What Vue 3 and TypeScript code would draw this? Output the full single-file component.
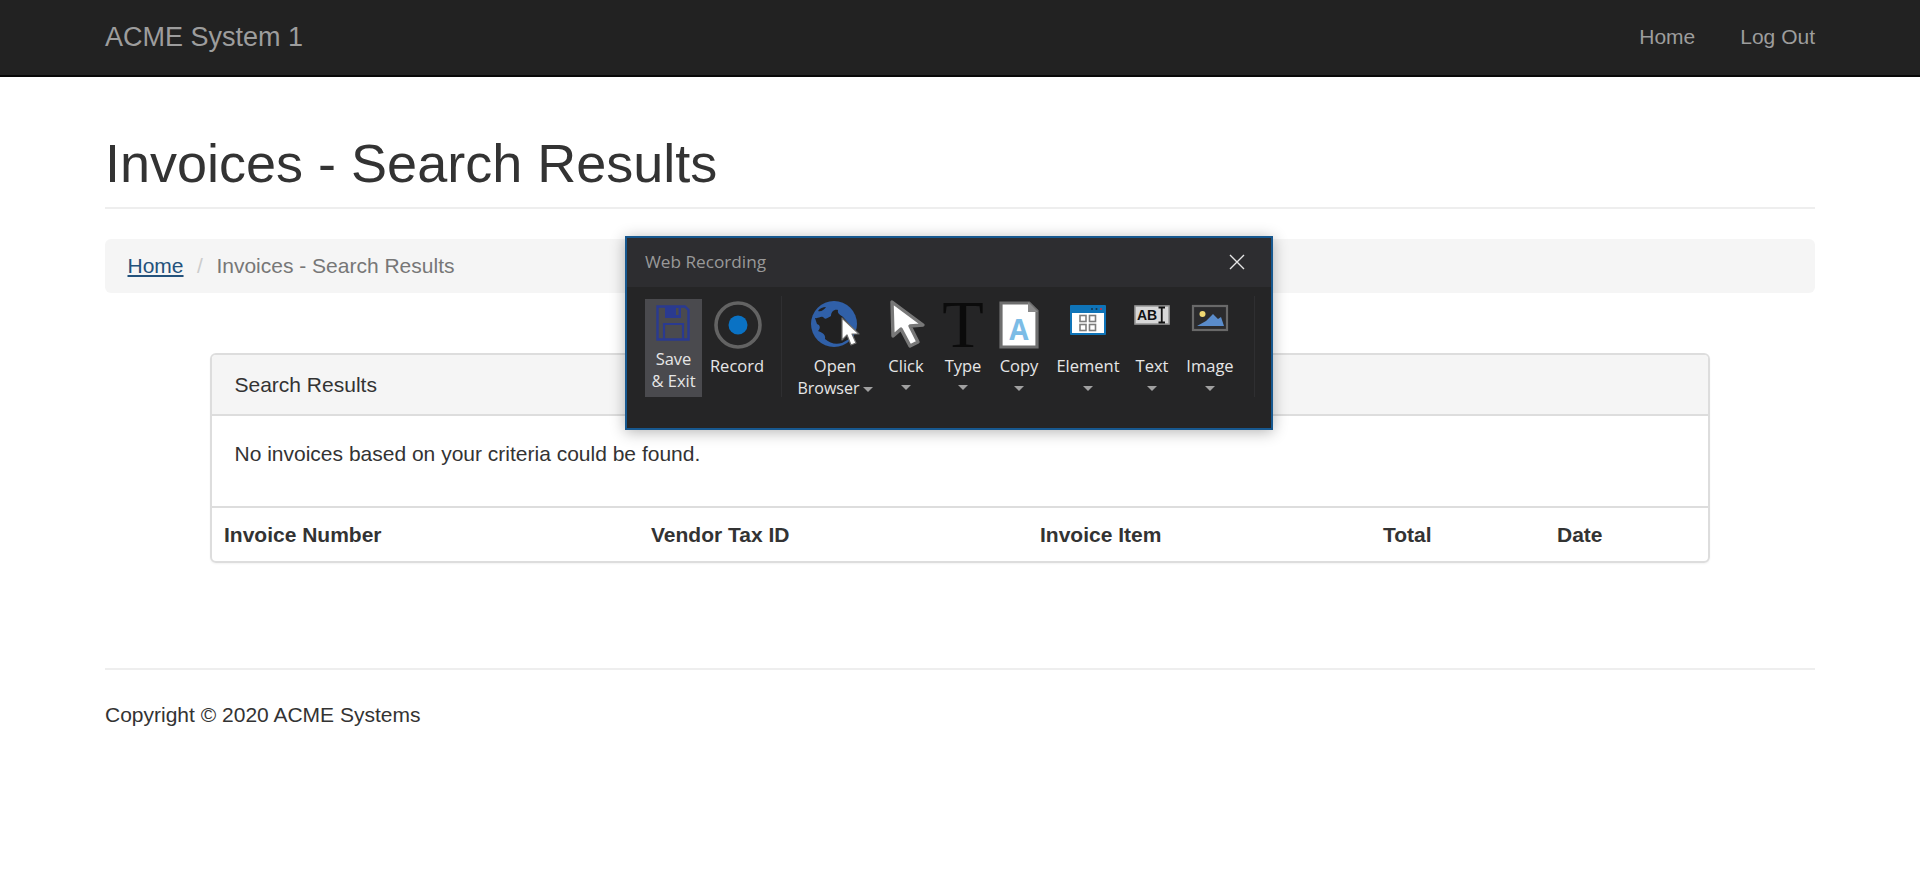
<script setup lang="ts">
const columns = ["Invoice Number", "Vendor Tax ID", "Invoice Item", "Total", "Date"];
</script>

<template>
  <div class="page">
    <nav class="navbar">
      <div class="nav-inner">
        <a class="brand">ACME System 1</a>
        <div class="nav-links">
          <a>Home</a>
          <a>Log Out</a>
        </div>
      </div>
    </nav>

    <main class="container">
      <div class="page-header">
        <h1>Invoices - Search Results</h1>
      </div>
      <div class="breadcrumb">
        <a class="crumb-link">Home</a>
        <span class="crumb-sep">/</span>
        <span class="crumb-active">Invoices - Search Results</span>
      </div>

      <section class="panel">
        <div class="panel-heading">Search Results</div>
        <div class="panel-body">
          <p>No invoices based on your criteria could be found.</p>
        </div>
        <div class="table-head">
          <div v-for="c in columns" :key="c" class="th">{{ c }}</div>
        </div>
      </section>

      <footer class="footer">
        <p>Copyright © 2020 ACME Systems</p>
      </footer>
    </main>

    <div class="recorder">
      <div class="rec-title">
        <span>Web Recording</span>
        <svg class="rec-close" width="16" height="16" viewBox="0 0 16 16">
          <path d="M1 1 15 15M15 1 1 15" stroke="#e6e6e6" stroke-width="1.4" fill="none" />
        </svg>
      </div>
      <div class="rec-body">
        <div class="tool tool-save">
          <svg class="ic-save" width="34" height="36" viewBox="0 0 34 36">
            <path d="M1.5 1.5H29L32.5 5V34.5H1.5Z" fill="none" stroke="#2a3a90" stroke-width="2.4" />
            <rect x="9" y="2" width="16" height="11" fill="#2a3a90" />
            <rect x="20" y="3" width="2.5" height="7" fill="#4a4a4e" />
            <path d="M8 34V19H27V34" fill="none" stroke="#2a3a90" stroke-width="2.2" />
          </svg>
          <div class="label">Save</div>
          <div class="label">&amp; Exit</div>
        </div>

        <div class="tool tool-record">
          <svg class="ic-record" width="48" height="48" viewBox="0 0 48 48">
            <circle cx="24" cy="24" r="22" fill="none" stroke="#636363" stroke-width="3.6" />
            <circle cx="24" cy="24" r="9.5" fill="#0a72c4" />
          </svg>
          <div class="label">Record</div>
        </div>

        <div class="tool-sep sep-a"></div>

        <div class="tool tool-browser">
          <svg class="ic-globe" width="50" height="46" viewBox="0 0 50 46">
            <circle cx="23" cy="23" r="23" fill="#3060a8" />
            <path d="M4 17C8 18 10 14 13 17C15 19 18 16 20 15C20 11 23 8 27 9C26 13 30 14 32 16L40 25L38 38L31 42C24 44 19 42 14 38C15 33 10 31 7 30C10 27 9 24 6 23Z" fill="#212122" />
            <path d="M7 10C10 11 13 9 15 6C12 6 9 7 7 10Z" fill="#212122" />
            <path d="M31 17V39L36 34L40 44L45 42L41 33L48 33Z" fill="#fff" stroke="#6d6d6d" stroke-width="1.2" stroke-linejoin="round" />
          </svg>
          <div class="label">Open</div>
          <div class="label browser-label">Browser<i class="caret caret-inline"></i></div>
        </div>

        <div class="tool tool-click">
          <svg class="ic-cursor" width="38" height="50" viewBox="0 0 38 50">
            <path d="M3 3 4 37 12 30 21 47 29 43 21 27 34 26Z" fill="#fff" stroke="#787878" stroke-width="3.4" stroke-linejoin="round" />
          </svg>
          <div class="label">Click</div>
          <div class="caret-row"><i class="caret"></i></div>
        </div>

        <div class="tool tool-type">
          <svg class="ic-type" width="44" height="50" viewBox="0 0 44 50">
            <text x="22" y="48" text-anchor="middle" font-family="'Liberation Serif', serif" font-size="68" fill="#0b0b0b">T</text>
          </svg>
          <div class="label">Type</div>
          <div class="caret-row"><i class="caret"></i></div>
        </div>

        <div class="tool tool-copy">
          <svg class="ic-copy" width="40" height="48" viewBox="0 0 40 48">
            <path d="M2 2H30L38 10V46H2Z" fill="#fff" stroke="#6e6e6e" stroke-width="3.2" />
            <path d="M29 1 39 11H29Z" fill="#8a8a8a" />
            <text x="20" y="39" text-anchor="middle" font-family="'Open Sans', sans-serif" font-weight="700" font-size="28" fill="#7cbce6">A</text>
          </svg>
          <div class="label">Copy</div>
          <div class="caret-row"><i class="caret"></i></div>
        </div>

        <div class="tool tool-element">
          <svg class="ic-element" width="36" height="30" viewBox="0 0 36 30">
            <rect width="36" height="30" rx="1" fill="#0f74b8" />
            <rect x="2" y="8" width="32" height="20" fill="#fff" />
            <circle cx="22" cy="4" r="1" fill="#14344c" />
            <circle cx="26.5" cy="4" r="1" fill="#14344c" />
            <circle cx="31" cy="4" r="1" fill="#d92b3a" />
            <g fill="none" stroke="#7d7d7d" stroke-width="1.6">
              <rect x="10" y="10.5" width="6" height="6" />
              <rect x="19.5" y="10.5" width="6" height="6" />
              <rect x="10" y="19.5" width="6" height="6" />
              <rect x="19.5" y="19.5" width="6" height="6" />
            </g>
          </svg>
          <div class="label">Element</div>
          <div class="caret-row"><i class="caret"></i></div>
        </div>

        <div class="tool tool-text">
          <svg class="ic-text" width="36" height="20" viewBox="0 0 36 20">
            <rect x="1" y="1" width="34" height="18" fill="#d8d8d8" stroke="#9a9a9a" stroke-width="1.6" />
            <text x="3" y="15" font-family="'Liberation Sans', sans-serif" font-weight="700" font-size="14" fill="#111">AB</text>
            <path d="M24.5 2.5H31M24.5 17.5H31M27.75 3V17" stroke="#111" stroke-width="1.8" fill="none" />
          </svg>
          <div class="label">Text</div>
          <div class="caret-row"><i class="caret"></i></div>
        </div>

        <div class="tool tool-image">
          <svg class="ic-image" width="36" height="26" viewBox="0 0 36 26">
            <rect x="1" y="1" width="34" height="24" fill="#2b2b2d" stroke="#696969" stroke-width="2.2" />
            <circle cx="10.5" cy="9" r="3" fill="#f0d872" />
            <path d="M5 21 14 16 21 9 26 14 29 12 32 21Z" fill="#5a8ccb" />
          </svg>
          <div class="label">Image</div>
          <div class="caret-row"><i class="caret"></i></div>
        </div>

        <div class="tool-sep sep-b"></div>
      </div>
    </div>
  </div>
</template>

<style>
html,
body {
  margin: 0;
  background: #fff;
}
</style>

<style scoped>
.page {
  position: relative;
  min-height: 871px;
  font-family: "Liberation Sans", Arial, sans-serif;
  font-size: 21px;
  line-height: 30px;
  color: #333;
}

.navbar {
  height: 75px;
  background: #222;
  border-bottom: 2px solid #080808;
}

.nav-inner {
  display: flex;
  justify-content: space-between;
  align-items: center;
  box-sizing: border-box;
  height: 75px;
  padding: 0 105px 2px;
}

.brand {
  font-size: 27px;
  color: #9d9d9d;
}

.nav-links {
  display: flex;
  gap: 45px;
  color: #9d9d9d;
}

.container {
  padding: 0 105px;
}

.page-header {
  padding-top: 57px;
  border-bottom: 2px solid #eee;
}

h1 {
  margin: 0;
  padding-bottom: 14px;
  font-size: 54px;
  font-weight: 500;
  line-height: 59px;
  color: #333;
}

.breadcrumb {
  display: flex;
  align-items: center;
  margin-top: 30px;
  padding: 12px 22.5px;
  background: #f5f5f5;
  border-radius: 6px;
}

.crumb-link {
  color: #23527c;
  text-decoration: underline;
}

.crumb-sep {
  padding: 0 13.5px;
  color: #ccc;
}

.crumb-active {
  color: #777;
}

.panel {
  margin: 60px 105px 0;
  border: 2px solid #ddd;
  border-radius: 6px;
  box-shadow: 0 1px 2px rgba(0, 0, 0, 0.05);
}

.panel-heading {
  padding: 15px 22.5px 14px;
  background: #f5f5f5;
  border-bottom: 2px solid #ddd;
  border-radius: 4px 4px 0 0;
}

.panel-body {
  padding: 23px 22.5px 22px;
  color: #333;
}

.panel-body p {
  margin: 0 0 15px;
}

.table-head {
  display: grid;
  grid-template-columns: 427px 389px 343px 174px 1fr;
  border-top: 2px solid #ddd;
}

.th {
  padding: 12px 12px 11px;
  font-weight: 700;
}

.footer {
  margin-top: 105px;
  border-top: 2px solid #eee;
  padding-top: 30px;
}

.footer p {
  margin: 0;
}

/* floating recorder window */
.recorder {
  position: absolute;
  left: 625px;
  top: 236px;
  box-sizing: border-box;
  width: 648px;
  height: 194px;
  background: #252526;
  border: 2px solid #17588f;
  box-shadow: 0 2px 14px rgba(0, 0, 0, 0.3);
  font-family: "Open Sans", sans-serif;
  font-size: 16.5px;
  line-height: 22px;
  color: #e6e6e6;
}

.rec-title {
  display: flex;
  align-items: center;
  justify-content: space-between;
  height: 49px;
  padding: 0 26px 2px 18px;
  box-sizing: border-box;
  background: #2d2d30;
  font-size: 17.2px;
  color: #999;
}

.rec-close {
  display: block;
}

.rec-body {
  display: flex;
  align-items: flex-start;
  padding: 12px 0 0 18px;
}

.tool {
  display: flex;
  flex-direction: column;
  align-items: center;
  height: 98px;
  white-space: nowrap;
}

.tool svg {
  display: block;
  flex: none;
  overflow: visible;
}

.label {
  height: 22px;
}

.browser-label {
  font-size: 16px;
}

.tool-save {
  width: 57px;
  box-sizing: border-box;
  padding-top: 6px;
  background: #4a4a4e;
}

.ic-save {
  margin: 0 1px 7px 0;
}

.tool-record {
  width: 58px;
  margin-left: 6px;
  padding-top: 2px;
}

.ic-record {
  margin: 0 0 6px 2px;
}

.tool-sep {
  flex: none;
  width: 1px;
  height: 101px;
  margin-top: -3px;
  background: #2f2f31;
}

.sep-a {
  margin-left: 15px;
}

.sep-b {
  margin-left: 20px;
}

.tool-browser {
  width: 76px;
  margin-left: 15px;
  padding-top: 2px;
}

.ic-globe {
  margin-bottom: 8px;
  transform: translateX(1px);
}

.tool-click {
  width: 42px;
  margin-left: 12px;
}

.ic-cursor {
  margin-bottom: 6px;
  transform: translateX(2px);
}

.tool-type {
  width: 40px;
  margin-left: 16px;
}

.ic-type {
  margin-bottom: 6px;
}

.tool-copy {
  width: 44px;
  margin-left: 14px;
  padding-top: 2px;
}

.ic-copy {
  margin: 0 0 6px -1px;
}

.tool-element {
  width: 68px;
  margin-left: 13px;
  padding-top: 6px;
}

.ic-element {
  margin-bottom: 20px;
}

.tool-text {
  width: 44px;
  margin-left: 8px;
  padding-top: 6px;
}

.ic-text {
  margin-bottom: 30px;
}

.tool-image {
  width: 48px;
  margin-left: 12px;
  padding-top: 6px;
}

.ic-image {
  margin-bottom: 24px;
}

.caret-row {
  display: flex;
  justify-content: center;
  align-items: center;
  height: 22px;
}

.caret {
  display: block;
  width: 0;
  height: 0;
  border-left: 5px solid transparent;
  border-right: 5px solid transparent;
  border-top: 5.5px solid #a0a0a0;
}

.caret-inline {
  display: inline-block;
  margin-left: 3px;
  vertical-align: middle;
}
</style>
